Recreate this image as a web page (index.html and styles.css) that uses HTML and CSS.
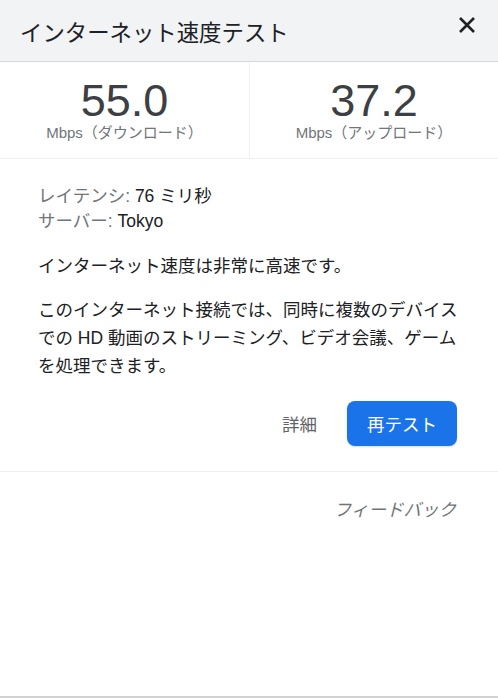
FILE: index.html
```html
<!DOCTYPE html>
<html>
<head>
    <title>インターネット速度テスト</title>
    <link rel="stylesheet" href="styles.css">
</head>
<body>
    <div class="page">
        <div class="header">
            <h1 class="title">インターネット速度テスト</h1>
            <button class="close" aria-label="閉じる">
                <svg width="18" height="18" viewBox="0 0 18 18">
                    <path d="M2 2 L16 16 M16 2 L2 16" stroke="#202124" stroke-width="2.6" fill="none"/>
                </svg>
            </button>
        </div>

        <div class="stats">
            <div class="stat">
                <div class="stat-value">55.0</div>
                <div class="stat-label">Mbps（ダウンロード）</div>
            </div>
            <div class="stat">
                <div class="stat-value">37.2</div>
                <div class="stat-label">Mbps（アップロード）</div>
            </div>
        </div>

        <div class="details">
            <div class="meta">
                <div><span class="meta-label">レイテンシ:</span> 76 ミリ秒</div>
                <div><span class="meta-label">サーバー:</span> Tokyo</div>
            </div>
            <p class="summary">インターネット速度は非常に高速です。</p>
            <p class="summary long">このインターネット接続では、同時に複数のデバイスでの HD 動画のストリーミング、ビデオ会議、ゲームを処理できます。</p>
            <div class="actions">
                <button class="link-btn">詳細</button>
                <button class="primary-btn">再テスト</button>
            </div>
        </div>

        <div class="footer">
            <a class="feedback" href="#">フィードバック</a>
        </div>
    </div>
</body>
</html>
```

FILE: styles.css
```css
html, body {
    margin: 0;
    padding: 0;
}

body {
    font-family: "Liberation Sans", "Noto Sans CJK JP", sans-serif;
    background-color: #ffffff;
    color: #202124;
}

.page {
    box-sizing: border-box;
    min-height: 698px;
    border-bottom: 2px solid #d2d2d2;
}

.header {
    display: flex;
    align-items: center;
    justify-content: space-between;
    height: 61px;
    padding: 0 22px 0 20px;
    background-color: #f1f3f4;
    border-bottom: 1px solid #d5d7da;
}

.title {
    margin: 0;
    font-size: 22.4px;
    font-weight: normal;
    color: #202124;
}

.close {
    display: flex;
    padding: 0;
    margin-top: -12px;
    border: none;
    background: none;
    cursor: pointer;
}

.stats {
    display: grid;
    grid-template-columns: 250px 1fr;
    height: 96px;
    border-bottom: 1px solid #efefef;
}

.stat {
    text-align: center;
    padding-top: 16px;
}

.stat:first-child {
    border-right: 1px solid #efefef;
}

.stat-value {
    font-size: 45px;
    line-height: 46px;
    color: #3c4043;
}

.stat-label {
    font-size: 15px;
    line-height: 17px;
    color: #70757a;
}

.details {
    padding: 25px 36px 0 38px;
    font-size: 17.5px;
}

.meta {
    line-height: 25px;
}

.meta-label {
    color: #70757a;
}

.summary {
    margin: 18px 0 0;
    line-height: 28px;
}

.long {
    margin-top: 16px;
}

.actions {
    display: flex;
    justify-content: flex-end;
    align-items: center;
    gap: 30px;
    margin-top: 21px;
    padding-right: 5px;
    padding-bottom: 25px;
}

.link-btn {
    padding: 0;
    border: none;
    background: none;
    font-family: inherit;
    font-size: 17.5px;
    color: #5f6368;
    cursor: pointer;
}

.primary-btn {
    width: 110px;
    height: 45px;
    border: none;
    border-radius: 8px;
    background-color: #1a73e8;
    font-family: inherit;
    font-size: 17.5px;
    color: #ffffff;
    box-shadow: 0 1px 2px rgba(0, 0, 0, 0.15);
    cursor: pointer;
}

.footer {
    border-top: 1px solid #eeeeee;
    padding: 24px 42px 0 0;
    text-align: right;
}

.feedback {
    font-size: 17.5px;
    font-style: italic;
    color: #70757a;
    text-decoration: none;
}
```
